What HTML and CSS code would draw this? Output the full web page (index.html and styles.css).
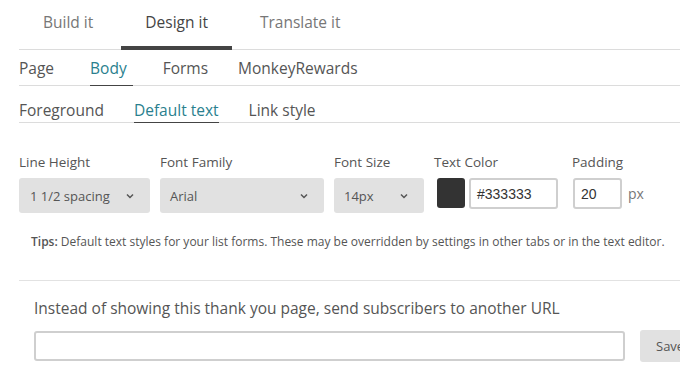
FILE: index.html
```html
<!DOCTYPE html>
<html>
<head>
<meta charset="utf-8">
<link rel="stylesheet" href="styles.css">
</head>
<body>
<div class="page">
  <nav class="main-tabs">
    <span class="main-tab">Build it</span>
    <span class="main-tab active">Design it</span>
    <span class="main-tab">Translate it</span>
  </nav>
  <nav class="sub-tabs row-two">
    <span class="sub-tab padded">Page</span>
    <span class="sub-tab active padded">Body</span>
    <span class="sub-tab">Forms</span>
    <span class="sub-tab">MonkeyRewards</span>
  </nav>
  <nav class="sub-tabs row-three">
    <span class="sub-tab">Foreground</span>
    <span class="sub-tab active">Default text</span>
    <span class="sub-tab">Link style</span>
  </nav>

  <div class="fields">
    <div class="field">
      <label class="label">Line Height</label>
      <div class="select w-lh"><span>1 1/2 spacing</span><svg class="chev" viewBox="0 0 8 6" width="8" height="6"><path d="M1 1.5 L4 4.5 L7 1.5" fill="none" stroke="#555" stroke-width="1.5"/></svg></div>
    </div>
    <div class="field">
      <label class="label">Font Family</label>
      <div class="select w-ff"><span>Arial</span><svg class="chev" viewBox="0 0 8 6" width="8" height="6"><path d="M1 1.5 L4 4.5 L7 1.5" fill="none" stroke="#555" stroke-width="1.5"/></svg></div>
    </div>
    <div class="field">
      <label class="label">Font Size</label>
      <div class="select w-fs"><span>14px</span><svg class="chev" viewBox="0 0 8 6" width="8" height="6"><path d="M1 1.5 L4 4.5 L7 1.5" fill="none" stroke="#555" stroke-width="1.5"/></svg></div>
    </div>
    <div class="field">
      <label class="label">Text Color</label>
      <div class="color-row">
        <span class="swatch"></span>
        <span class="input color-input">#333333</span>
      </div>
    </div>
    <div class="field pad-field">
      <label class="label">Padding</label>
      <div class="pad-row">
        <span class="input pad-input">20</span>
        <span class="unit">px</span>
      </div>
    </div>
  </div>

  <p class="tips"><strong>Tips:</strong> Default text styles for your list forms. These may be overridden by settings in other tabs or in the text editor.</p>

  <div class="redirect">
    <p class="redirect-label">Instead of showing this thank you page, send subscribers to another URL</p>
    <div class="redirect-row">
      <span class="input url-input"></span>
      <span class="save-btn">Save</span>
    </div>
  </div>
</div>
</body>
</html>
```
FILE: styles.css
```css
* { box-sizing: border-box; }
html, body { margin: 0; padding: 0; background: #fff; overflow: hidden; }
body { font-family: "Open Sans", "Liberation Sans", sans-serif; color: #444; }
.page { width: 760px; padding-left: 19px; }

.main-tabs {
  display: flex;
  gap: 4px;
  height: 50px;
  border-bottom: 1px solid #dcdcdc;
}
.main-tab {
  display: flex;
  align-items: center;
  padding: 0 24px 2px;
  font-size: 15.5px;
  color: #777;
  border-bottom: 4px solid transparent;
  margin-bottom: -1px;
}
.main-tab.active { color: #444; border-bottom-color: #444; }

.sub-tabs {
  display: flex;
  gap: 30px;
  border-bottom: 1px solid #dcdcdc;
}
.row-two { height: 36px; padding-top: 1px; }
.row-three { height: 37px; padding-top: 12px; }
.sub-tab {
  display: flex;
  align-items: center;
  font-size: 15.5px;
  color: #555;
  border-bottom: 1px solid transparent;
  margin-bottom: -1px;
}
.sub-tab.active { color: #2a7f8e; border-bottom-color: #444; }
.padded { padding-right: 6px; }

.fields {
  display: flex;
  gap: 10px;
  margin-top: 30px;
}
.field { display: flex; flex-direction: column; }
.label { font-size: 13.5px; color: #555; line-height: 18px; height: 18px; margin-bottom: 7px; }
.select {
  display: flex;
  align-items: center;
  justify-content: space-between;
  height: 35px;
  background: #e1e1e1;
  border-radius: 3px;
  padding: 0 16px 0 11px;
  font-size: 13px;
  color: #555;
}
.select span { padding-top: 1px; }
.w-lh { width: 131px; }
.w-ff { width: 164px; padding-left: 10px; }
.w-fs { width: 90px; padding-left: 10px; }
.chev { display: block; }

.color-row { display: flex; align-items: flex-start; gap: 4px; margin-left: 3px; }
.swatch {
  width: 28px;
  height: 30px;
  background: #333;
  border-radius: 3px;
}
.input {
  display: flex;
  align-items: center;
  height: 31px;
  border: 2px solid #cfcfcf;
  border-radius: 3px;
  background: #fff;
  font-family: "Liberation Sans", Arial, sans-serif;
  font-size: 14px;
  color: #333;
}
.color-input { width: 89px; padding-left: 6px; }
.pad-field { margin-left: 4px; }
.pad-row { display: flex; align-items: center; gap: 6px; height: 31px; margin-left: 1px; }
.pad-input { width: 49px; padding-left: 6px; }
.unit { font-size: 14px; color: #777; }

.tips {
  margin: 21px 0 0 12px;
  font-size: 12px;
  line-height: 16px;
  color: #555;
  width: 660px;
}
.tips strong { font-weight: 600; }

.redirect {
  margin-top: 30px;
  border-top: 1px solid #e2e2e2;
  padding: 17px 0 0 15px;
}
.redirect-label {
  margin: 0;
  font-size: 15.5px;
  line-height: 20px;
  color: #555;
}
.redirect-row { display: flex; align-items: center; gap: 15px; margin-top: 12px; }
.url-input { width: 591px; height: 30px; }
.save-btn {
  display: flex;
  align-items: center;
  height: 32px;
  padding: 0 16px;
  background: #e1e1e1;
  border-radius: 3px;
  font-size: 13px;
  color: #555;
}
```
